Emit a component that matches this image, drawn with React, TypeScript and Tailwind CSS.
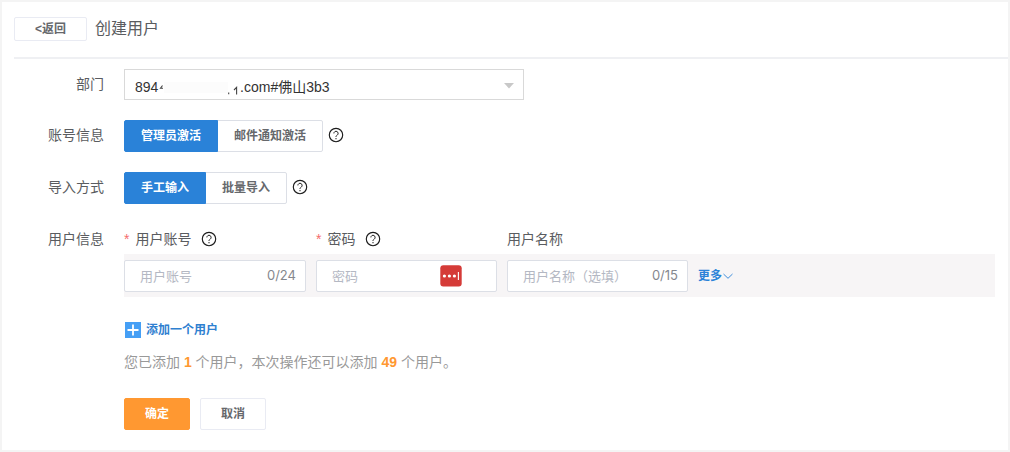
import { useState, type ReactNode } from "react";

function HelpIcon() {
  return (
    <svg viewBox="0 0 16 16" className="h-4 w-4 shrink-0" fill="none" stroke="#1c1c1c" role="img" aria-label="帮助">
      <circle cx="8" cy="8" r="6.7" strokeWidth="1.15" />
      <path d="M5.900 6.400a2.100 2.100 0 1 1 3.300 1.700C8.300 8.800 8 9.100 8 10" strokeWidth="1" />
      <circle cx="8" cy="11.700" r="0.650" fill="#1c1c1c" stroke="none" />
    </svg>
  );
}

function Row({ label, htmlFor, children }: { label: string; htmlFor?: string; children: ReactNode }) {
  return (
    <div className="flex items-start">
      <label htmlFor={htmlFor} className="w-[110px] shrink-0 pr-5 text-right text-sm leading-[30px]">
        {label}
      </label>
      <div className="flex min-w-0 flex-1 gap-[5px]">{children}</div>
    </div>
  );
}

function Segmented({ options }: { options: string[] }) {
  const [active, setActive] = useState(0);
  return (
    <div className="flex -space-x-px" role="group">
      {options.map((option, i) => (
        <button
          key={option}
          type="button"
          aria-pressed={i === active}
          onClick={() => setActive(i)}
          className={
            "h-8 border px-4 text-xs font-bold first:rounded-l-xs last:rounded-r-xs " +
            (i === active
              ? "relative border-[#2a82d8] bg-[#2a82d8] text-white"
              : "border-[#dcdfe6] bg-white text-[#66686c]")
          }
        >
          {option}
        </button>
      ))}
    </div>
  );
}

function Field({ id, placeholder, type, children }: { id: string; placeholder: string; type: string; children?: ReactNode }) {
  return (
    <div className="flex h-8 items-center rounded-xs border border-[#dcdfe6] bg-white">
      <input
        id={id}
        type={type}
        placeholder={placeholder}
        className="h-full w-full min-w-0 flex-1 bg-transparent pl-[15px] text-[13px] outline-none placeholder:text-[#b4b8c3]"
      />
      {children}
    </div>
  );
}

function PasswordManagerIcon() {
  return (
    <svg viewBox="0 0 22 22" className="mr-[34px] h-[22px] w-[22px] shrink-0" aria-hidden="true">
      <rect x="0.300" y="0.300" width="21.400" height="21.200" rx="3" fill="#d53b38" />
      <circle cx="4.400" cy="11" r="1.600" fill="#fff" />
      <circle cx="9.400" cy="11" r="1.600" fill="#fff" />
      <circle cx="14.400" cy="11" r="1.600" fill="#fff" />
      <path d="M18.400 7v8" stroke="#fff" strokeWidth="1.100" />
    </svg>
  );
}

const columns = "grid grid-cols-[182px_181px_181px_auto] gap-x-2.5";

export default function App() {
  return (
    <main className="min-h-screen border-2 border-[#f4f4f4] bg-white pb-5 pl-3 font-['Liberation_Sans','Noto_Sans_CJK_SC',sans-serif] text-[#5a5c60]">
      <header className="flex items-center gap-2 border-b-2 border-[#eff0f3] pt-[15px] pb-4">
        <button type="button" className="h-6 rounded-xs border border-[#e9ebf3] px-5 text-xs font-bold text-[#66686c]">
          &lt;返回
        </button>
        <h1 className="text-base leading-5">创建用户</h1>
      </header>

      <form className="flex flex-col gap-5 pt-2.5 pr-[13px]" onSubmit={(e) => e.preventDefault()}>
        <Row label="部门" htmlFor="department">
          <div className="relative w-[400px]">
            <select
              id="department"
              className="block h-[31px] w-full appearance-none border border-[#d9d9d9] bg-white px-2.5 pt-1 text-sm text-[#333]"
            >
              <option>
                {"894" + "\u00a0".repeat(21) + ".com#佛山3b3"}
              </option>
            </select>
            <svg viewBox="0 0 90 20" className="pointer-events-none absolute top-2 left-[34px] h-5 w-[90px]" aria-hidden="true">
              <rect x="6" y="5" width="64" height="11" fill="#fcfcfc" />
              <path d="M4.500 8.500L2.500 11.200h2.500M70.700 15.500v1.800M76 13l2.600-2.600v7" fill="none" stroke="#444" strokeWidth="1.100" />
            </svg>
            <svg viewBox="0 0 10 6" className="pointer-events-none absolute top-3.5 right-[10px] h-1.5 w-2.5" aria-hidden="true">
              <path d="M0 0h10L5 5.500z" fill="#c8c8c8" />
            </svg>
          </div>
        </Row>

        <Row label="账号信息">
          <Segmented options={["管理员激活", "邮件通知激活"]} />
          <div className="flex h-[30px] items-center">
            <HelpIcon />
          </div>
        </Row>

        <Row label="导入方式">
          <Segmented options={["手工输入", "批量导入"]} />
          <div className="flex h-[30px] items-center">
            <HelpIcon />
          </div>
        </Row>

        <Row label="用户信息">
          <div className="flex-1">
            <div className={columns + " h-[30px] items-center text-sm"}>
              <div className="flex items-center">
                <label htmlFor="account" className="mr-2.5">
                  <span className="mr-1.5 text-[#f56c6c]">*</span>用户账号
                </label>
                <HelpIcon />
              </div>
              <div className="flex items-center">
                <label htmlFor="password" className="mr-2.5">
                  <span className="mr-1.5 text-[#f56c6c]">*</span>密码
                </label>
                <HelpIcon />
              </div>
              <label htmlFor="display-name">用户名称</label>
            </div>

            <div className={columns + " items-center bg-[#f7f5f6] pt-1.5 pb-[5px]"}>
              <Field id="account" type="text" placeholder="用户账号">
                <span className="pr-[9px] font-['Inter'] text-[13px] text-[#85888e]">0/24</span>
              </Field>
              <Field id="password" type="password" placeholder="密码">
                <PasswordManagerIcon />
              </Field>
              <Field id="display-name" type="text" placeholder="用户名称（选填）">
                <span className="pr-[9px] font-['Inter'] text-[13px] text-[#85888e]">0/15</span>
              </Field>
              <button type="button" className="flex items-center justify-self-start text-xs font-bold text-[#2a82d8]">
                更多
                <svg viewBox="0 0 12 12" className="h-3 w-3" fill="none" stroke="#2a82d8" strokeWidth="0.900" aria-hidden="true">
                  <path d="M1.500 4L6 8.300 10.500 4" />
                </svg>
              </button>
            </div>

            <button type="button" className="mt-6 flex h-[18px] items-center gap-[5px] text-xs font-bold text-[#2f80d0]">
              <svg viewBox="0 0 17 16" className="h-4 w-[17px]" aria-hidden="true">
                <rect x="1" width="16" height="16" fill="#459ff5" />
                <path d="M9 2.500v11M3.500 8h11" stroke="#fff" strokeWidth="1.800" />
              </svg>
              添加一个用户
            </button>

            <p className="mt-[13px] text-sm leading-5 text-[#999]">
              您已添加 <strong className="text-[#ff9831]">1</strong> 个用户，本次操作还可以添加{" "}
              <strong className="text-[#ff9831]">49</strong> 个用户。
            </p>

            <div className="mt-[26px] flex gap-2.5 text-xs font-bold">
              <button type="submit" className="h-8 rounded-xs border border-[#ff9831] bg-[#ff9831] px-5 text-white">
                确定
              </button>
              <button type="button" className="h-8 rounded-xs border border-[#e9ebf3] bg-white px-5 text-[#66686c]">
                取消
              </button>
            </div>
          </div>
        </Row>
      </form>
    </main>
  );
}
